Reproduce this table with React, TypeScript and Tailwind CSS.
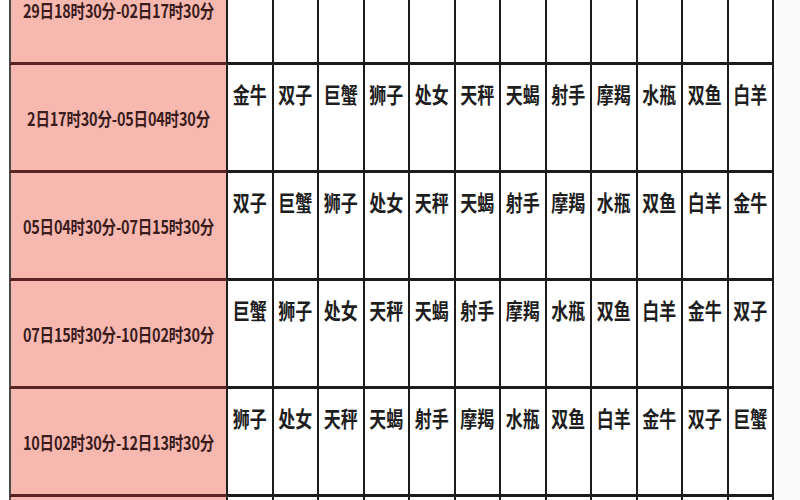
import React from "react";

const SIGNS = ["白羊", "金牛", "双子", "巨蟹", "狮子", "处女", "天秤", "天蝎", "射手", "摩羯", "水瓶", "双鱼"];

const ROWS = [
  "29日18时30分-02日17时30分",
  "2日17时30分-05日04时30分",
  "05日04时30分-07日15时30分",
  "07日15时30分-10日02时30分",
  "10日02时30分-12日13时30分",
  "12日13时30分-15日00时30分",
];

export default function App() {
  return (
    <div
      className="w-[800px] h-[500px] overflow-hidden bg-[#fafafa]"
      style={{ fontFamily: '"Noto Sans CJK SC", "Noto Sans", sans-serif' }}
    >
      <div className="flex flex-col pl-[9px] mt-[-43px] bg-white w-[776px]">
        {ROWS.map((label, r) => (
          <div key={r} className="flex h-[108px]">
            <div className="w-[219px] shrink-0 bg-[#f7b8b0] border-l-2 border-l-[#4a4a4a] border-b-[3px] border-b-[#5a2424] border-r-2 border-r-[#1e1e1e] flex items-center justify-center">
              <span className="inline-block scale-y-125 text-[14.5px] font-bold text-[#3a1c1c] tracking-[-0.2px] leading-[20px]">
                {label}
              </span>
            </div>
            {Array.from({ length: 12 }).map((_, c) => (
              <div
                key={c}
                className="w-[45.5px] shrink-0 bg-white border-r-2 border-r-[#1c1c1c] border-b-[3px] border-b-[#1c1c1c] flex justify-center pt-[25px]"
              >
                <span className="inline-block scale-y-125 text-[17px] font-bold text-[#1e1e1e] leading-[22px] whitespace-nowrap">
                  {SIGNS[(r + c) % 12]}
                </span>
              </div>
            ))}
          </div>
        ))}
      </div>
    </div>
  );
}
